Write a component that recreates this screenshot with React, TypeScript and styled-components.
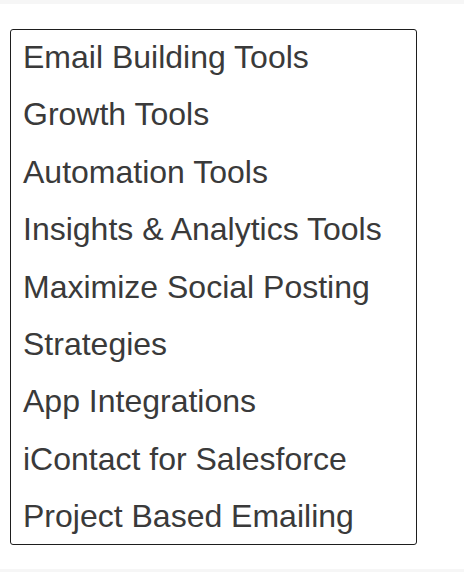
import React from 'react';
import styled, { createGlobalStyle } from 'styled-components';

const GlobalStyle = createGlobalStyle`
    html, body {
        margin: 0;
        padding: 0;
        background: #ffffff;
    }
    body {
        font-family: "Liberation Sans", Arial, sans-serif;
    }
`

const Page = styled.div`
    width: 464px;
    height: 572px;
    display: flex;
    flex-direction: column;
    justify-content: space-between;
    background: #ffffff;
`

const Strip = styled.div<{ $h: number }>`
    height: ${p => p.$h}px;
    background: #f6f6f6;
`

const Content = styled.div`
    flex: 1;
    padding: 25px 0 0 10px;
`

const ToolList = styled.ul`
    list-style: none;
    margin: 0;
    padding: 0 12px;
    width: 407px;
    box-sizing: border-box;
    border: 1.5px solid #1e1e1e;
    border-radius: 3px;
`

const ToolItem = styled.li`
    font-family: "Liberation Sans", Arial, sans-serif;
    font-size: 32px;
    line-height: 57.4px;
    color: #3a3a3a;
    white-space: nowrap;

    &:first-child {
        margin-top: -1px;
    }
    &:last-child {
        margin-bottom: -2px;
    }
`

const tools = [
    'Email Building Tools',
    'Growth Tools',
    'Automation Tools',
    'Insights & Analytics Tools',
    'Maximize Social Posting',
    'Strategies',
    'App Integrations',
    'iContact for Salesforce',
    'Project Based Emailing',
];

const App = () => {
    return (
        <>
            <GlobalStyle />
            <Page>
                <Strip $h={4} />
                <Content>
                    <ToolList>
                        {tools.map(t => (
                            <ToolItem key={t}>{t}</ToolItem>
                        ))}
                    </ToolList>
                </Content>
                <Strip $h={3} />
            </Page>
        </>
    );
}

export default App;
